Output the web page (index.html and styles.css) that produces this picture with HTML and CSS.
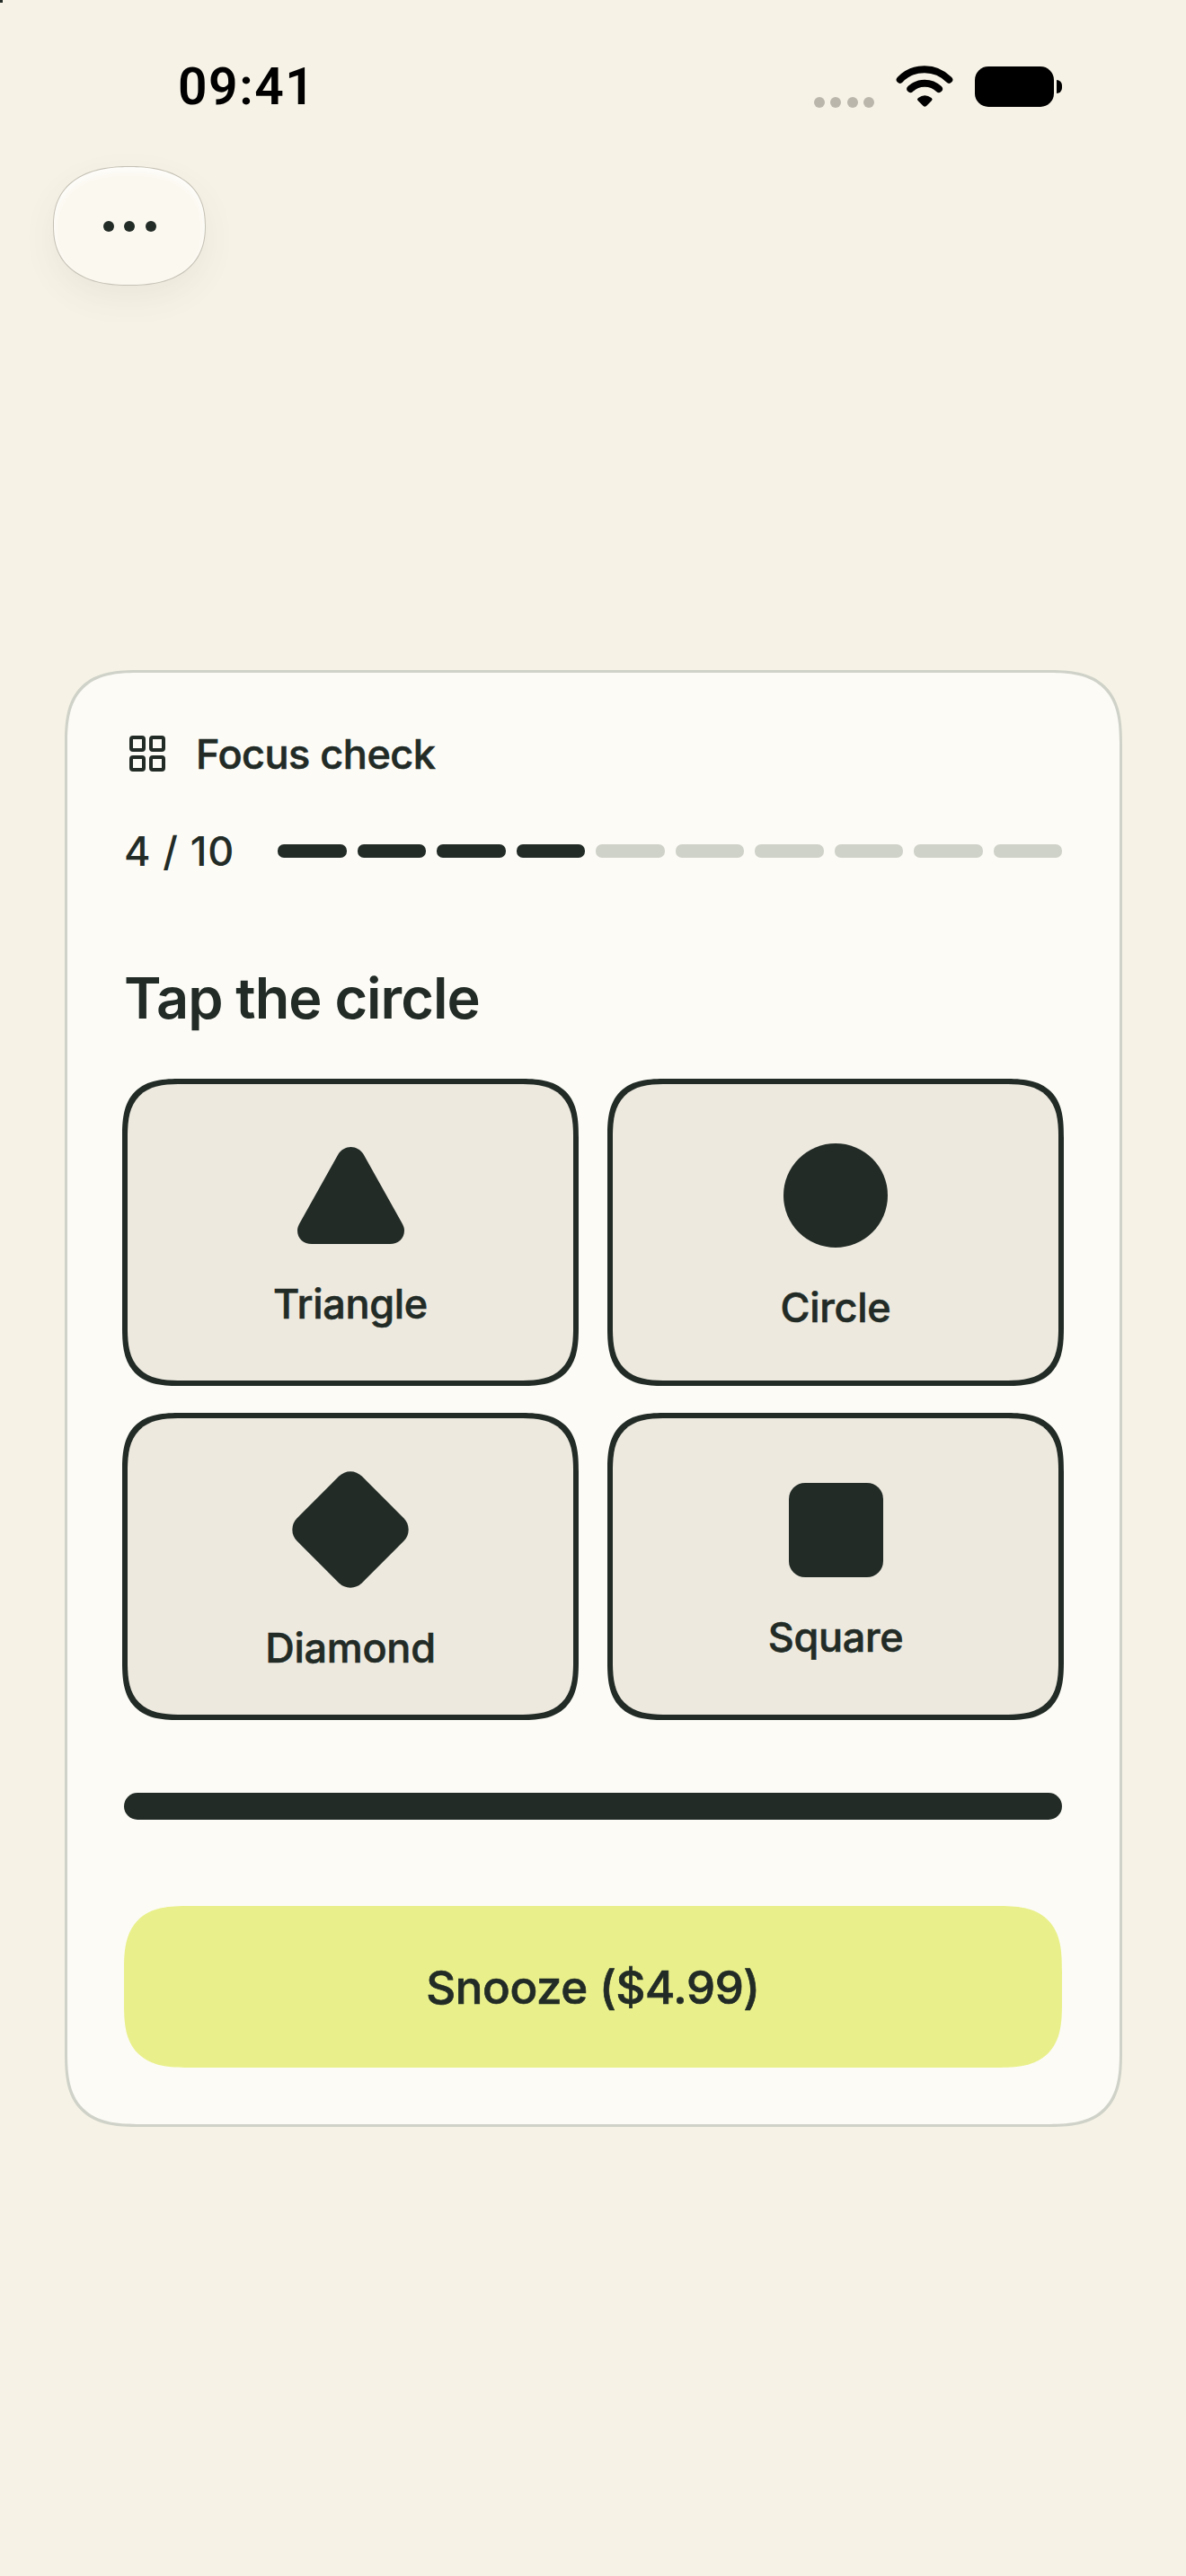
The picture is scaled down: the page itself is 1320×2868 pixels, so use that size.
FILE: index.html
```html
<!DOCTYPE html>
<html lang="en">
<head>
<meta charset="UTF-8">
<title>Focus check</title>
<link rel="stylesheet" href="styles.css">
</head>
<body>
<div id="corner-mark"></div>
<div id="status-bar">
  <span id="clock">09:41</span>
  <div id="status-icons">
    <div class="signal-dots"><i></i><i></i><i></i><i></i></div>
    <svg class="wifi" viewBox="0 0 64 48" width="64" height="48">
      <path d="M4.7 16.7A38 38 0 0 1 59.3 16.7" fill="none" stroke="#000" stroke-width="8" stroke-linecap="round"/>
      <path d="M16.3 27A23 23 0 0 1 48 27" fill="none" stroke="#000" stroke-width="8" stroke-linecap="round"/>
      <path d="M25 37Q32.3 31.5 39.7 37Q41.5 38.5 40 40L34 46Q32.3 47.5 30.6 46L24.6 40Q23 38.5 25 37Z" fill="#000"/>
    </svg>
    <div class="battery"><div class="battery-body"></div><div class="battery-cap"></div></div>
  </div>
</div>

<button id="menu-button" aria-label="More"><i></i><i></i><i></i></button>

<div id="card">
  <div class="card-header">
    <svg class="grid-icon" viewBox="0 0 24 24" width="48" height="48" fill="none" stroke="#222b26" stroke-width="2" stroke-linecap="round" stroke-linejoin="round">
      <rect x="3" y="3" width="7" height="7" rx="1"/>
      <rect x="14" y="3" width="7" height="7" rx="1"/>
      <rect x="3" y="14" width="7" height="7" rx="1"/>
      <rect x="14" y="14" width="7" height="7" rx="1"/>
    </svg>
    <span class="card-title">Focus check</span>
  </div>

  <div class="progress-row">
    <span class="progress-count">4 / 10</span>
    <div class="progress-steps">
      <div class="step done"></div>
      <div class="step done"></div>
      <div class="step done"></div>
      <div class="step done"></div>
      <div class="step"></div>
      <div class="step"></div>
      <div class="step"></div>
      <div class="step"></div>
      <div class="step"></div>
      <div class="step"></div>
    </div>
  </div>

  <h1 id="prompt">Tap the circle</h1>

  <div class="shape-grid">
    <div class="tile">
      <svg class="shape" viewBox="0 0 119 108" width="119" height="108">
        <path d="M45.5 8C48.5 3 54 0 59.5 0C65 0 70.5 3 73.5 8L116 84C118 87.5 119 90 119 93C119 102 112 108 103 108H16C7 108 0 102 0 93C0 90 1 87.5 3 84Z" fill="#222b26"/>
      </svg>
      <span class="tile-label">Triangle</span>
    </div>
    <div class="tile">
      <div class="shape circle"></div>
      <span class="tile-label">Circle</span>
    </div>
    <div class="tile">
      <div class="shape diamond-box"><div class="diamond"></div></div>
      <span class="tile-label">Diamond</span>
    </div>
    <div class="tile">
      <div class="shape square"></div>
      <span class="tile-label">Square</span>
    </div>
  </div>

  <div class="answer-bar"></div>

  <button id="snooze">Snooze ($4.99)</button>
</div>
</body>
</html>
```

FILE: styles.css
```css
body {
  margin: 0;
  background-color: #f6f2e6;
  font-family: Inter, "Liberation Sans", sans-serif;
  color: #222b26;
}
/* stray dark pixels in the window corner */
#corner-mark {
  position: absolute;
  left: 0;
  top: 0;
  width: 3px;
  height: 3px;
  background-color: #222b26;
}
#status-bar {
  display: flex;
  justify-content: space-between;
  align-items: center;
  height: 64px;
  padding: 64px 138px 0 198px;
}
#clock {
  font-family: Roboto, "Liberation Sans", sans-serif;
  font-size: 57px;
  font-weight: 600;
  letter-spacing: 1.5px;
  color: #000;
}
#status-icons {
  display: flex;
  align-items: center;
}
.signal-dots {
  display: flex;
  gap: 6.5px;
  margin: 36px 24px 0 0;
}
.signal-dots i {
  width: 12px;
  height: 12px;
  border-radius: 50%;
  background-color: #bab6ac;
}
.wifi {
  margin-right: 24px;
}
.battery {
  display: flex;
  align-items: center;
  gap: 3px;
}
.battery-body {
  width: 88px;
  height: 45px;
  border-radius: 15px;
  background-color: #000;
}
.battery-cap {
  width: 6px;
  height: 15px;
  border-radius: 0 8px 8px 0;
  background-color: #000;
}
#menu-button {
  display: flex;
  align-items: center;
  justify-content: center;
  gap: 11.5px;
  width: 170px;
  height: 133px;
  margin: 57px 0 0 59px;
  padding: 0;
  border: 1.5px solid #c5c1b6;
  border-radius: 50%;
  corner-shape: superellipse(1.25);
  background-color: #fbf8ef;
  box-shadow: 0 14px 36px rgba(90, 80, 50, 0.07), inset 0 5px 10px rgba(255, 255, 255, 0.8);
}
#menu-button i {
  width: 12px;
  height: 12px;
  border-radius: 50%;
  background-color: #222b26;
}
#card {
  width: 1177px;
  height: 1622px;
  box-sizing: border-box;
  margin: 428px 0 0 72px;
  padding: 66px 64px 63px 63px;
  border: 3px solid #cfd2c8;
  border-radius: 84px;
  corner-shape: superellipse(1.5);
  background-color: #fcfbf6;
}
.card-header {
  display: flex;
  align-items: center;
  gap: 30px;
  height: 48px;
}
.grid-icon {
  margin-left: 2px;
}
.card-title {
  font-size: 45px;
  font-weight: 500;
  letter-spacing: -0.5px;
  -webkit-text-stroke: 0.6px #222b26; /* weight between 500 and 600 */
}
.progress-row {
  display: flex;
  align-items: center;
  gap: 48px;
  margin-top: 60px;
  height: 48px;
}
.progress-count {
  font-size: 45px;
  font-weight: 500;
  letter-spacing: 0.9px;
  white-space: nowrap;
}
.progress-steps {
  display: flex;
  flex: 1;
  gap: 12px;
}
.step {
  flex: 1;
  height: 15px;
  border-radius: 7px;
  background-color: #cfd2c8;
}
.step.done {
  background-color: #222b26;
}
#prompt {
  margin: 102px 0 0 0;
  font-size: 63px;
  font-weight: 600;
  line-height: 76px;
  letter-spacing: -1px;
}
.shape-grid {
  display: grid;
  grid-template-columns: repeat(2, 508px);
  grid-auto-rows: 342px;
  gap: 30px 32px;
  margin: 52px -2px 0;
}
.tile {
  display: flex;
  flex-direction: column;
  align-items: center;
  justify-content: center;
  gap: 40px;
  box-sizing: border-box;
  padding-top: 12px;
  border: 6px solid #222b26;
  border-radius: 66px;
  corner-shape: superellipse(1.5);
  background-color: #ede9df;
}
.tile-label {
  font-size: 45px;
  font-weight: 500;
  line-height: 54px;
  letter-spacing: -0.3px;
  -webkit-text-stroke: 0.6px #222b26;
}
.circle {
  width: 116px;
  height: 116px;
  border-radius: 50%;
  background-color: #222b26;
}
.diamond-box {
  display: flex;
  align-items: center;
  justify-content: center;
  width: 130px;
  height: 130px;
}
.diamond {
  flex: none;
  width: 102px;
  height: 102px;
  border-radius: 18px;
  background-color: #222b26;
  transform: rotate(45deg);
}
.square {
  width: 105px;
  height: 105px;
  border-radius: 18px;
  background-color: #222b26;
}
.answer-bar {
  height: 30px;
  margin-top: 81px;
  border-radius: 15px;
  background-color: #222b26;
}
#snooze {
  display: block;
  width: 100%;
  height: 180px;
  margin-top: 96px;
  border: none;
  border-radius: 72px;
  corner-shape: superellipse(1.5);
  background-color: #e9f08b;
  color: #222b26;
  font-family: Inter, "Liberation Sans", sans-serif;
  font-size: 51px;
  font-weight: 500;
  letter-spacing: -0.4px;
  -webkit-text-stroke: 0.7px #222b26;
}
```
